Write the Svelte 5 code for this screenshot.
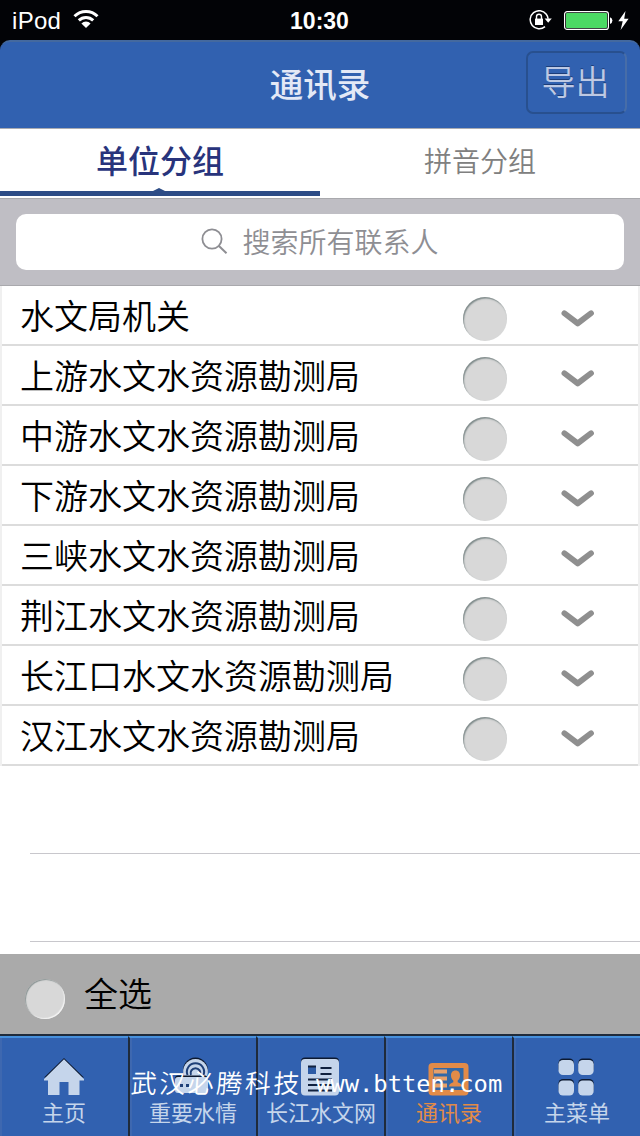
<script>
  let activeTab = $state("unit");
  let activeNav = $state("contacts");

  const groups = [
    "水文局机关",
    "上游水文水资源勘测局",
    "中游水文水资源勘测局",
    "下游水文水资源勘测局",
    "三峡水文水资源勘测局",
    "荆江水文水资源勘测局",
    "长江口水文水资源勘测局",
    "汉江水文水资源勘测局",
  ];

  const navItems = [
    { id: "home", label: "主页" },
    { id: "water", label: "重要水情" },
    { id: "news", label: "长江水文网" },
    { id: "contacts", label: "通讯录" },
    { id: "menu", label: "主菜单" },
  ];
</script>

<div class="screen">
  <div class="status-bar">
    <div class="carrier">
      <span>iPod</span>
      <svg width="26" height="20" viewBox="0 0 26 20">
        <g fill="none" stroke="#fff" stroke-width="3">
          <path d="M1.5 7.2a16.4 16.4 0 0 1 23 0" />
          <path d="M5.8 11.4a10.3 10.3 0 0 1 14.4 0" />
        </g>
        <path d="M13 19l-4.6-4.5a6.4 6.4 0 0 1 9.2 0z" fill="#fff" />
      </svg>
    </div>
    <div class="time">10:30</div>
    <div class="status-icons">
      <svg width="23" height="20" viewBox="0 0 23 20">
        <path d="M17.3 4.2A9 9 0 1 0 16 16.6M17.3 4.2a9 9 0 0 1 1.8 4.6" fill="none" stroke="#fff" stroke-width="1.5" />
        <path d="M15.6 8.5h7.2l-3.6 4.2z" fill="#fff" />
        <rect x="6" y="8.6" width="8" height="6.4" fill="#fff" />
        <path d="M7.5 9V6.8a2.5 2.5 0 0 1 5 0V9" fill="none" stroke="#fff" stroke-width="1.4" />
      </svg>
      <svg class="battery" width="50" height="19" viewBox="0 0 50 19">
        <rect x="0.6" y="0.6" width="43.8" height="17.8" rx="2.5" fill="none" stroke="#fff" stroke-width="1.2" />
        <rect x="2" y="2" width="41" height="15" rx="1" fill="#4cd964" />
        <path d="M46 6.2a3.6 3.6 0 0 1 0 6.8z" fill="#fff" />
      </svg>
      <svg width="11" height="19" viewBox="0 0 11 19">
        <path d="M7.5 0L.3 10.3h4.4L2.6 19 10.6 7.8H6.2z" fill="#fff" />
      </svg>
    </div>
  </div>

  <header>
    <h1>通讯录</h1>
    <button class="export">导出</button>
  </header>

  <div class="tabs">
    <button class:active={activeTab === "unit"} onclick={() => (activeTab = "unit")}>单位分组</button>
    <button class:active={activeTab === "pinyin"} onclick={() => (activeTab = "pinyin")}>拼音分组</button>
  </div>

  <div class="search">
    <div class="search-box">
      <svg width="27" height="27" viewBox="0 0 27 27" fill="none" stroke="#8e8e93">
        <circle cx="11" cy="11" r="9.6" stroke-width="1.8" />
        <path d="M17.7 17.7l7.8 7.5" stroke-width="2" />
      </svg>
      <span>搜索所有联系人</span>
    </div>
  </div>

  <ul>
    {#each groups as group}
      <li>
        <span class="name">{group}</span>
        <span class="check"></span>
        <svg width="34" height="18" viewBox="0 0 34 18">
          <path d="M3.4 3.2L16.700 13.400 30 3.200" fill="none" stroke="#8f8f8f" stroke-width="5.800" stroke-linecap="round" stroke-linejoin="round" />
        </svg>
      </li>
    {/each}
  </ul>

  <div class="blank">
    <div></div>
    <div></div>
  </div>

  <div class="select-all">
    <span class="check small"></span>
    <span class="all-label">全选</span>
  </div>

  <nav>
    {#each navItems as item}
      <button class:active={activeNav === item.id} onclick={() => (activeNav = item.id)}>
        <svg width="44" height="42" viewBox="0 0 44 42">
          {#if item.id === "home"}
            <path d="M2 21.500L22 2l20 19.500z" fill="#0c1930" />
            <path d="M2 23L22 3.200 42 23v1.500h-4.500V39h-11V26h-9v13H6V24.500H2z" fill="#c5d5eb" />
          {:else if item.id === "water"}
            <path d="M13 20a12.400 12.400 0 1 1 23 0" fill="#0c1930" transform="translate(0 -1.500)" />
            <path d="M13 20a12.400 12.400 0 1 1 23 0" fill="#c5d5eb" />
            <g fill="none" stroke="#1e3f77" stroke-width="2">
              <path d="M16.500 19a8.600 8.600 0 1 1 16 0" />
              <path d="M20 19a4.900 4.900 0 1 1 9 0" />
            </g>
            <rect x="22.800" y="15" width="3.500" height="7" fill="#c5d5eb" />
            <rect x="4" y="19.500" width="33" height="15" rx="3" fill="#0c1930" />
            <rect x="4" y="21" width="33" height="16" rx="3" fill="#c5d5eb" />
            <path d="M9 29.500h3M15 29.500h3" stroke="#1e3f77" stroke-width="3" />
          {:else if item.id === "news"}
            <rect x="2" y="1.500" width="38" height="37" rx="4" fill="#0c1930" />
            <rect x="2" y="3" width="38" height="36.500" rx="4" fill="#c5d5eb" />
            <rect x="9" y="10" width="8" height="8" fill="#2c5ba5" />
            <path d="M9 10.500h8M21.500 12h11M21.500 18h11M9 23.500h24M9 29h24M9 34.500h24" fill="none" stroke="#10213e" stroke-width="2" />
          {:else if item.id === "contacts"}
            <rect x="1.500" y="7" width="40" height="32.500" rx="4" fill="#e28b48" />
            <path d="M6.500 12h30v22h-30z" fill="#3268a7" />
            <path d="M7 15.500h13M7 22.500h13M7 29.500h13" stroke="#e7a06b" stroke-width="3.800" />
            <path d="M28.500 14.500c-3.200 0-4.500 2.200-4.500 5 0 2.400 1.100 4 2.300 5v1.800c-2.500 1-4 1.600-4.300 4.200h13c-.3-2.600-1.800-3.200-4.300-4.200v-1.800c1.200-1 2.300-2.600 2.300-5 0-2.800-1.300-5-4.500-5z" fill="#e28b48" />
          {:else}
            {#each [3.5, 23.2] as x}
              {#each [2.5, 23] as y}
                <rect {x} {y} width="15.500" height="15" rx="4.500" fill="#0c1930" />
                <rect {x} y={y + 1.5} width="15.500" height="15" rx="4.500" fill="#c5d5eb" />
              {/each}
            {/each}
          {/if}
        </svg>
        <span>{item.label}</span>
      </button>
    {/each}
  </nav>

  <div class="watermark">
    <span class="company">武汉必腾科技</span>
    <span class="site">www.btten.com</span>
  </div>
</div>

<style>
  :global(body) {
    background: #fff;
  }

  .screen {
    position: relative;
    display: flex;
    flex-direction: column;
    width: 640px;
    height: 1136px;
    overflow: hidden;
    background: #fff;
    font-family: "Noto Sans CJK SC", sans-serif;
    font-weight: 350;
  }

  button {
    margin: 0;
    padding: 0;
    border: 0;
    background: none;
    font: inherit;
    color: inherit;
  }

  .status-bar {
    display: grid;
    grid-template-columns: 1fr auto 1fr;
    align-items: center;
    height: 40px;
    padding: 0 12px;
    box-sizing: border-box;
    background: #020306;
    box-shadow: 0 12px 0 #020306;
    color: #fff;
    font-family: "Liberation Sans", sans-serif;
    font-size: 24px;
  }

  .carrier {
    display: flex;
    align-items: center;
    gap: 12px;
    padding-top: 2px;
    letter-spacing: 0.300px;
  }

  .carrier svg {
    margin-top: -4px;
  }

  .time {
    padding: 2px 1px 0 0;
    font-size: 23px;
    font-weight: bold;
  }

  .status-icons {
    display: flex;
    align-items: center;
    justify-content: flex-end;
    margin-right: -1px;
  }

  .battery {
    margin: 0 4px 0 12px;
  }

  header {
    display: grid;
    grid-template-columns: 1fr auto 1fr;
    height: 89px;
    box-sizing: border-box;
    border-top: 2px solid #44699f;
    border-bottom: 1px solid #a9abb2;
    border-radius: 10px 10px 0 0;
    background: #3161b0;
    clip-path: inset(0);
    color: #e3e9f6;
  }

  h1 {
    grid-column: 2;
    margin: 16px 0 0;
    font-size: 33.500px;
    font-weight: 500;
    line-height: 50px;
  }

  .export {
    justify-self: end;
    width: 101px;
    height: 63px;
    margin: 9px 13px 0 0;
    box-sizing: border-box;
    border: 2px solid #28508f;
    border-right-color: #476da8;
    border-radius: 7px;
    padding: 0 2px 3px 0;
    font-size: 34px;
    line-height: 56px;
    color: #bdc9e4;
    text-shadow: 0 -1.500px 0 #1c3d79;
  }

  .tabs {
    display: flex;
    height: 69px;
  }

  .tabs button {
    position: relative;
    flex: 1;
    height: 67px;
    box-sizing: border-box;
    padding-bottom: 6px;
    font-size: 28px;
    line-height: 60px;
    color: #808080;
  }

  .tabs button.active {
    padding-bottom: 2px;
    border-bottom: 5px solid #2d4c86;
    font-size: 32px;
    font-weight: 500;
    color: #28347c;
  }

  .tabs button.active::after {
    content: "";
    position: absolute;
    left: 153px;
    bottom: 0;
    border: 6px solid transparent;
    border-top: 0;
    border-bottom: 3px solid #2d4c86;
  }

  .search {
    height: 88px;
    padding: 15px 16px;
    box-sizing: border-box;
    border-top: 1px solid #a9a9ad;
    border-bottom: 1px solid #a9a9ad;
    background: #bfbec4;
  }

  .search-box {
    display: flex;
    align-items: center;
    justify-content: center;
    gap: 14px;
    height: 56px;
    border-radius: 10px;
    background: #fff;
    font-size: 28px;
    line-height: 54px;
    color: #8e8e93;
  }

  .search-box span {
    margin-top: -3px;
  }

  .search-box svg {
    margin-top: -1px;
  }

  ul {
    margin: 0;
    padding: 0;
    list-style: none;
    border: solid #f0f0f0;
    border-width: 0 2px;
  }

  li {
    display: flex;
    align-items: center;
    height: 60px;
    padding: 0 43px 0 18px;
    box-sizing: border-box;
    border-bottom: 2px solid #dcdcdc;
  }

  .name {
    flex: 1;
    font-size: 34px;
    line-height: 58px;
    color: #000;
  }

  .check {
    width: 44px;
    height: 44px;
    margin: 8px 54px 0 0;
    border-radius: 50%;
    background: #d8d8d8;
    box-shadow: inset 1px 1.500px 1.500px #7f8b8b;
  }

  li svg {
    margin-top: 7px;
  }

  .blank {
    flex: 1;
    padding-left: 30px;
  }

  .blank div {
    height: 88px;
    box-sizing: border-box;
    border-bottom: 1px solid #c8c7cc;
  }

  .select-all {
    display: flex;
    align-items: center;
    height: 80px;
    padding-left: 25px;
    font-size: 34px;
    background: #aaa;
    color: #000;
  }

  .all-label {
    margin-top: -4px;
  }

  .small {
    width: 40px;
    height: 40px;
    margin: 9px 19px 0 0;
    box-shadow: inset 1px 1px 1px #8d9696, inset -1px -1px 1px #f4f4f4;
  }

  nav {
    display: grid;
    grid-template-columns: repeat(5, 128px);
    height: 102px;
    box-sizing: border-box;
    border-top: 2px solid #1f2b3b;
    background: #3161b0;
  }

  nav button {
    display: flex;
    flex-direction: column;
    align-items: center;
    box-sizing: border-box;
    padding-top: 18px;
    border-top: 2px solid #4790dc;
    font-size: 22px;
    font-weight: 400;
    line-height: 32px;
    white-space: nowrap;
    color: #c5d5eb;
    box-shadow: inset 2px 0 #3e68b0;
  }

  nav button + button {
    border-left: 2px solid #1f2b3b;
  }

  nav button span {
    margin-top: -3px;
  }

  nav button.active {
    color: #e28b48;
  }

  .watermark {
    position: absolute;
    left: 131px;
    top: 1069px;
    display: flex;
    align-items: center;
    height: 26px;
    line-height: 26px;
    color: #fff;
    white-space: nowrap;
    pointer-events: none;
  }

  .company {
    width: 185px;
    font-size: 26px;
    letter-spacing: 2.500px;
    transform: skewX(-4deg);
  }

  .site {
    padding-top: 3px;
    font-family: "DejaVu Sans Mono", monospace;
    font-size: 23.800px;
    font-weight: 400;
  }
</style>
